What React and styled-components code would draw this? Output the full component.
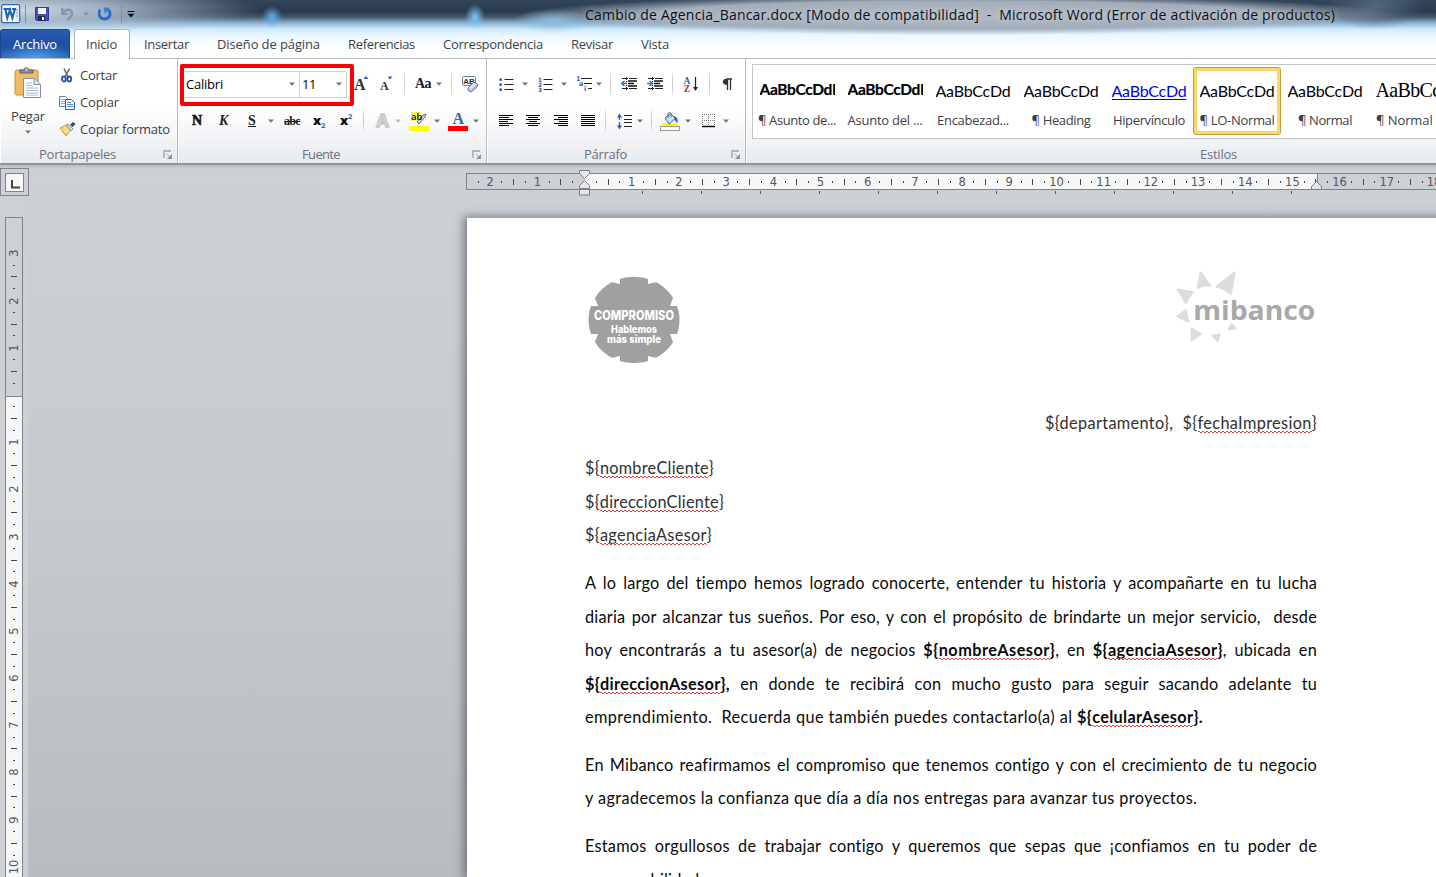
import React, { useLayoutEffect, useRef, useState } from "react";
import styled, { createGlobalStyle, css } from "styled-components";

const UI = `"Open Sans", "Noto Sans", sans-serif`;
const DOC = `Lato, "Open Sans", sans-serif`;

const Global = createGlobalStyle`
  * { box-sizing: border-box; }
  body { margin: 0; background: #c9ccd1; overflow: hidden; font-family: ${UI}; }
`;

/* Text that is tracked so that it fills exactly the given width. */
const Tracked = styled.span`
  display: inline-block;
  white-space: pre;
  text-decoration: inherit;
`;
function Fit({ w, children }) {
  const ref = useRef(null);
  const [ls, setLs] = useState(0);
  useLayoutEffect(() => {
    const n = ref.current.textContent.length;
    const cur = ref.current.getBoundingClientRect().width;
    setLs((v) => v + (w - cur) / n);
  }, [w]);
  return <Tracked ref={ref} style={{ letterSpacing: ls + "px" }}>{children}</Tracked>;
}

const Window = styled.div`
  width: 1436px;
  height: 877px;
  overflow: hidden;
  display: flex;
  flex-direction: column;
`;

/* ---------- title bar and tabs ---------- */
const Chrome = styled.header`
  height: 59px;
  flex: none;
  display: flex;
  flex-direction: column;
  background:
    radial-gradient(ellipse 260px 26px at 0px 10px, #d3e0ec 0, #b4c6d6cc 45%, transparent 100%),
    radial-gradient(ellipse 10px 11px at 272px 17px, #5fb0f0 0, transparent 100%),
    radial-gradient(ellipse 10px 13px at 475px 17px, #7cc4f8 0, transparent 100%),
    radial-gradient(ellipse 40px 12px at 553px 21px, #8dbde0 0, transparent 100%),
    radial-gradient(ellipse 440px 20px at 960px 15px, #b3bac4 0, #a3adba 70%, transparent 100%),
    radial-gradient(ellipse 50px 24px at 1375px 6px, #53677e 0, transparent 100%),
    linear-gradient(#33455a 0, #2a3a4d 12px, #43586e 17px, #8fb2d0 23px, #cdeaff 29px, #ecf8ff 36px, #fafdfe 46px, #fff 58px);
`;
const TitleBar = styled.div`
  height: 29px;
  display: flex;
  align-items: center;
  padding-left: 1px;
`;
const QuickAccess = styled.div`
  width: 584px;
  display: flex;
  align-items: center;
  height: 27px;
  padding-bottom: 2px;
`;
const Title = styled.div`
  font-size: 14px;
  line-height: 27px;
  height: 28px;
  color: #0b0f14;
  text-shadow: 0 0 6px rgba(225, 232, 240, 0.8);
`;
const Tabs = styled.nav`
  height: 30px;
  display: flex;
  align-items: stretch;
  border-bottom: 1px solid #b6babf;
  font-size: 13px;
  color: #3f4348;
`;
const FileTab = styled.div`
  width: 70px;
  height: 29px;
  margin-right: 4px;
  padding-left: 12px;
  line-height: 29px;
  color: #fff;
  border: 1px solid #1b468f;
  border-bottom: 0;
  border-radius: 3px 3px 0 0;
  background: radial-gradient(ellipse 40px 14px at 50% 100%, #4ba0ea 0, transparent 100%),
    linear-gradient(#2a5caf, #1f4ea3 50%, #2563b8);
`;
const Tab = styled.div`
  width: ${(p) => p.$w}px;
  padding-left: ${(p) => p.$pl}px;
  line-height: 31px;
  ${(p) => p.$active && css`
    height: 30px;
    line-height: 29px;
    padding-left: 11px;
    background: #fff;
    border: 1px solid #b0b4ba;
    border-bottom: 0;
    border-radius: 3px 3px 0 0;
  `}
`;

/* ---------- ribbon ---------- */
const Ribbon = styled.section`
  height: 106px;
  flex: none;
  display: flex;
  background: linear-gradient(#fff 0, #fff 45%, #f3f4f6 75%, #e6eaef 100%);
  border-bottom: 2px solid #8f949b;
  color: #3c4045;
  font-size: 13px;
`;
const Group = styled.div`
  position: relative;
  width: ${(p) => p.$w}px;
  flex: none;
  display: flex;
  flex-direction: column;
  border-right: 1px solid #b9bdc3;
  box-shadow: inset 1px 0 #fff;
`;
const GroupBody = styled.div`
  height: 84px;
  flex: none;
  display: flex;
  flex-direction: ${(p) => (p.$row ? "row" : "column")};
`;
const GroupLabel = styled.div`
  height: 20px;
  line-height: 23px;
  display: flex;
  justify-content: space-between;
  padding-left: ${(p) => p.$pl}px;
  padding-right: 4px;
  color: #6b717a;
`;
const PasteButton = styled.div`
  width: 56px;
  padding-top: 8px;
  display: flex;
  flex-direction: column;
  align-items: center;
  line-height: 20px;
  & > svg:first-child { margin-bottom: 8px; }
  & > svg:last-child { margin-top: 4px; }
`;
const ClipList = styled.div`
  display: flex;
  flex-direction: column;
  padding-top: 3px;
`;
const ClipItem = styled.div`
  height: 27px;
  display: flex;
  align-items: center;
  line-height: 24px;
  & > ${Tracked} { margin-top: -2px; }
`;
const ClipIcon = styled.div`
  width: 24px;
  flex: none;
  padding-left: ${(p) => p.$pl}px;
  line-height: 0;
`;
const ToolRow = styled.div`
  height: ${(p) => p.$h}px;
  padding-left: ${(p) => p.$pl}px;
  padding-top: ${(p) => p.$pt || 0}px;
  display: flex;
  align-items: center;
`;
const Slot = styled.div`
  width: ${(p) => p.$w}px;
  height: 24px;
  flex: none;
  display: flex;
  align-items: center;
`;
const Glyph = styled.span`
  font-family: ${(p) => p.$f || `"Liberation Serif", serif`};
  font-size: ${(p) => p.$s || 14}px;
  font-weight: 700;
  font-style: ${(p) => (p.$i ? "italic" : "normal")};
  text-decoration: ${(p) => p.$d || "none"};
  -webkit-text-stroke: ${(p) => (p.$heavy ? "0.6px #111" : "0")};
  color: #1c1c1c;
  line-height: 20px;
  white-space: nowrap;
`;
const Combo = styled.div`
  width: ${(p) => p.$w}px;
  height: 27px;
  flex: none;
  border: 1px solid #cfd1d4;
  border-left-width: ${(p) => (p.$joined ? 0 : 1)}px;
  background: #fff;
  display: flex;
  align-items: center;
  justify-content: space-between;
  padding: 0 4px 1px 2px;
  font-size: 13px;
  line-height: 22px;
  color: #000;
`;
const Highlight = styled.div`
  position: absolute;
  left: 2px;
  top: 5px;
  width: 174px;
  height: 42px;
  border: 4px solid #fb0007;
  border-radius: 2px;
`;
const Divider = styled.i`
  width: 1px;
  height: 22px;
  background: linear-gradient(#e4e6e9, #c3c7cd, #e4e6e9);
`;
const BarDivider = styled(Divider)`
  height: 18px;
  background: #7f8fa0;
`;
const Gallery = styled.div`
  height: 75px;
  width: 720px;
  margin: 5px 0 0 6px;
  border: 1px solid #c3c7cc;
  background: #fff;
  display: flex;
`;
const StyleCard = styled.div`
  width: 88px;
  height: 68px;
  margin-top: 2px;
  flex: none;
  display: flex;
  flex-direction: column;
  align-items: center;
  white-space: nowrap;
  border: 1px solid transparent;
  ${(p) => p.$on && css`
    border-color: #c39a3c;
    border-radius: 3px;
    box-shadow: inset 0 0 0 3px #fcd766;
  `}
`;
const Preview = styled.div`
  height: 32px;
  margin-top: 7px;
  line-height: ${(p) => (p.$b ? 29 : 31)}px;
  font-family: ${(p) => (p.$serif ? `"Liberation Serif", serif` : DOC)};
  font-size: ${(p) => (p.$serif ? 20 : p.$b ? 15.5 : 16)}px;
  font-weight: ${(p) => (p.$b ? 700 : 400)};
  -webkit-text-stroke: ${(p) => (p.$b ? "0.2px #000" : "0")};
  color: ${(p) => (p.$link ? "#0000f0" : "#000")};
  text-decoration: ${(p) => (p.$link ? "underline" : "none")};
  text-underline-offset: 2px;
  width: 75px;
  overflow: hidden;
`;
const CardName = styled.div`
  line-height: 27px;
  color: #3c4045;
`;

const CaretSvg = styled.svg`
  display: block;
`;
const Caret = ({ c = "#777" }) => (
  <CaretSvg width="6" height="4"><path d="M0 0.5h6L3 3.7z" fill={c} /></CaretSvg>
);
const LauncherSvg = styled.svg`
  margin-top: 7px;
`;
const Launcher = () => (
  <LauncherSvg width="10" height="10">
    <path d="M1 8V1h7" fill="none" stroke="#9b9fa6" strokeWidth="1.3" />
    <path d="M4 4l3 3" stroke="#9b9fa6" /><path d="M9 4v5H4z" fill="#8d9198" />
  </LauncherSvg>
);

const WordLogo = () => (
  <svg width="20" height="20">
    <rect x="0.7" y="0.7" width="18" height="18" rx="1.5" fill="#fff" stroke="#2e67a9" strokeWidth="1.2" />
    <path d="M14 3h4v14h-4z" fill="#dfeaf6" /><path d="M15 6h2M15 9h2M15 12h2" stroke="#6d9bd0" />
    <path d="M2.5 5h4M6 5h4M11 5h4M4.3 5l2 9 2.7-8 2.4 8 2.4-9" fill="none" stroke="#2566b0" strokeWidth="2.2" />
  </svg>
);
const Save = () => (
  <svg width="14" height="14">
    <path d="M0.5 0.5h13v13h-12l-1-1z" fill="#4a50b8" stroke="#32388f" />
    <path d="M3 1h8v6H3z" fill="#f3f5ff" /><path d="M3 9h7v5H3z" fill="#23275f" /><path d="M7 10h2v3H7z" fill="#fff" />
  </svg>
);
const Undo = () => (
  <svg width="13" height="14">
    <path d="M1.2 1v6h6" fill="none" stroke="#8796a8" strokeWidth="2.2" />
    <path d="M2 6C5 1.5 11 2 11 6.5 11 9 9 11 6.5 13" fill="none" stroke="#8796a8" strokeWidth="2.6" />
  </svg>
);
const Redo = () => (
  <svg width="14" height="14">
    <path d="M2.2 2.5C-0.8 7 2 12 6.500 12S14 7 10.500 3" fill="none" stroke="#2b6bc8" strokeWidth="2.800" />
    <path d="M5.500 0.500h6l-0.500 2L7 7z" fill="#3b7dd8" />
  </svg>
);
const CustomizeBar = () => (
  <svg width="8" height="8"><path d="M0.5 1.5h7" stroke="#111" /><path d="M0.5 3.7h7L4 7.5z" fill="#111" /></svg>
);
const Paste = () => (
  <svg width="28" height="31">
    <rect x="1" y="3" width="23" height="25" rx="2" fill="#eebc67" stroke="#c68f3c" />
    <path d="M6 6V3h4c0-3 5-3 5 0h4v3z" fill="#8b8e92" stroke="#5e6165" /><circle cx="12.500" cy="2.500" r="1" fill="#fff" />
    <path d="M9.500 11.500h11l6 6v13h-17z" fill="#fdfeff" stroke="#7f8ea3" /><path d="M20 11.500v6h6" fill="#e3ebf5" stroke="#7f8ea3" />
    <path d="M12 16h6M12 18.500h6M12 21h12M12 23.500h12M12 26h12M12 28h12" stroke="#a9bcd6" />
  </svg>
);
const Cut = () => (
  <svg width="12" height="15">
    <path d="M3 0.500l4.500 9M8.500 0.500L4 9" stroke="#5d6b7c" strokeWidth="1.600" />
    <ellipse cx="2.900" cy="11" rx="1.900" ry="2.500" fill="none" stroke="#2555a5" strokeWidth="1.900" />
    <ellipse cx="8.300" cy="11" rx="1.900" ry="2.500" fill="none" stroke="#2555a5" strokeWidth="1.900" />
  </svg>
);
const Copy = () => (
  <svg width="17" height="14">
    <path d="M0.500 0.500h6l2 2v8h-8z" fill="#fff" stroke="#5a7fb5" /><path d="M2 3.500h4M2 5.500h5M2 7.500h5" stroke="#8dabd8" />
    <path d="M6.500 3.500h6l3 3v7h-9z" fill="#fff" stroke="#2d5ba5" /><path d="M8 6.500h4M8 8.500h6M8 10.500h6" stroke="#5f8dcc" />
  </svg>
);
const Brush = () => (
  <svg width="17" height="15">
    <path d="M1 6l6-3 5 5-5 6z" fill="#f2cf62" stroke="#b98f2c" strokeWidth="0.800" />
    <path d="M3 7l6 4M5 5l5 4" stroke="#fff3b5" /><path d="M7 3l2-1 5 5-2 2z" fill="#d8dbe2" stroke="#676d7d" strokeWidth="0.700" />
    <path d="M11 3l3-3 2.500 2-3 3z" fill="#34467c" />
  </svg>
);
const GrowFont = ({ down }) => (
  <svg width="16" height="18">
    <text x="0" y="14.500" fontFamily="Liberation Serif" fontWeight="700" fontSize={down ? 12 : 16} fill="#333">A</text>
    <path d={down ? "M7.500 1.500h5l-2.500 3z" : "M9.500 4h5L12 1z"} fill="#2d5fb0" />
  </svg>
);
const ClearFormat = () => (
  <svg width="17" height="17">
    <rect x="0.500" y="0.500" width="13" height="9" rx="1" fill="#f7faff" stroke="#6681aa" />
    <text x="1.300" y="8" fontFamily="Liberation Sans" fontWeight="700" fontSize="8" fill="#333">AB</text>
    <path d="M6 12l6-6 3.500 2.500v2l-6 5.500L6 14.500z" fill="#d7e3f5" stroke="#5878ad" />
    <path d="M6 12l3.500 2.500 6-6" fill="none" stroke="#7d98c6" />
  </svg>
);
const ListIcon = ({ numbers }) => (
  <svg width="15" height="15">
    <path d="M5.500 2.500h9M5.500 7.500h9M5.500 12.500h9" stroke="#222" />
    {numbers
      ? [1, 2, 3].map((n, i) => <text key={n} x="0" y={4.800 + i * 5} fontSize="5.800" fontWeight="700" fontFamily="DejaVu Sans" fill="#2f5fae">{n}</text>)
      : [2.500, 7.500, 12.500].map((y) => <rect key={y} x="0.300" y={y - 1.300} width="2.700" height="2.700" rx="1" fill="#2f5fae" />)}
  </svg>
);
const MultiLevel = () => (
  <svg width="17" height="16">
    <path d="M5 2.500h11M8 7.500h8M12 12.500h4" stroke="#222" />
    <g fill="#2f5fae" fontSize="6.500" fontWeight="700" fontFamily="DejaVu Sans"><text x="0" y="5">1</text><text x="3" y="10">a</text><text x="8" y="15">i</text></g>
  </svg>
);
const Indent = ({ right }) => (
  <svg width="17" height="14">
    <path d="M1 1.500h15M1 11.500h15" stroke="#222" strokeDasharray="6 1 9" />
    <path d="M7 4h9M7 6.500h6M7 9h9" stroke="#111" strokeWidth="1.600" /><path d="M5.500 0v14" stroke="#222" strokeDasharray="1 1" />
    <path d={right ? "M0 6.500h4M2.500 4l3 2.500-3 2.500" : "M6 6.500H2M3.500 4l-3 2.500 3 2.500"} fill="none" stroke="#2f6fc0" strokeWidth="1.500" />
  </svg>
);
const SortIcon = () => (
  <svg width="17" height="17">
    <text x="0.500" y="7.500" fontSize="9.500" fontWeight="700" fontFamily="Liberation Serif" fill="#2f5fae">A</text>
    <text x="0.800" y="15.500" fontSize="9.500" fontWeight="700" fontFamily="Liberation Serif" fill="#963434">Z</text>
    <path d="M12.500 1v11" stroke="#222" strokeWidth="1.300" /><path d="M10 11h5l-2.500 4z" fill="#222" />
  </svg>
);
const Pilcrow = () => (
  <svg width="11" height="13"><path d="M5.500 1v11M8.500 1v11M5 1h5" stroke="#333" strokeWidth="1.300" /><path d="M5.500 0.500v6.500C-0.800 7-0.800 0.500 5.500 0.500z" fill="#333" /></svg>
);
const ALIGN = {
  left: ["0 14", "0 10", "0 14", "0 9", "0 14", "0 10"],
  center: ["0 14", "2 12", "0 14", "3 11", "0 14", "2 12"],
  right: ["0 14", "4 14", "0 14", "5 14", "0 14", "4 14"],
  full: ["0 14", "0 14", "0 14", "0 14", "0 14", "0 14"],
};
const Align = ({ kind }) => (
  <svg width="14" height="12">
    {ALIGN[kind].map((s, i) => {
      const [a, b] = s.split(" ");
      return <path key={i} d={`M${a} ${0.500 + i * 2.0}H${b}`} stroke="#000" />;
    })}
  </svg>
);
const LineSpacing = () => (
  <svg width="16" height="17">
    <path d="M2.500 2v12" stroke="#2f5fae" strokeDasharray="5 2 5" strokeWidth="1.300" /><path d="M0 4.500L2.500 0.500 5 4.500zM0 12.500l2.500 4 2.500-4z" fill="#2f5fae" />
    <path d="M7 2.500h8M7 6.500h8M7 9.500h8M7 13.500h8" stroke="#222" />
  </svg>
);
const Bucket = () => (
  <svg width="20" height="19">
    <path d="M2 12.500h16" stroke="#f4f000" strokeWidth="2" />
    <path d="M5 6l5.500-4.500 5 5L9 12z" fill="#cddcf0" stroke="#48658f" /><path d="M8 6V2c0-2 3-2 3 0v3" fill="none" stroke="#48658f" />
    <path d="M14 4c3 1 4 3 3.500 7-2-1-3-3-3.500-7z" fill="#2f62ad" /><rect x="0.500" y="14.500" width="19" height="4" fill="#fff" stroke="#999" />
  </svg>
);
const Borders = () => (
  <svg width="14" height="14"><path d="M0.500 0v12M6.500 0v12M12.500 0v12M0 0.500h13M0 6.500h13" stroke="#777" strokeDasharray="1 1" /><path d="M0 12.500h13" stroke="#000" strokeWidth="1.400" /></svg>
);
const TextEffect = () => (
  <svg width="17" height="18"><text x="1" y="15" fontFamily="Liberation Sans" fontWeight="700" fontSize="18" fill="#e6e7e9" stroke="#c3c5c8" strokeWidth="1.500">A</text></svg>
);
const Marker = () => (
  <svg width="20" height="19">
    <rect x="2" y="0" width="10" height="9" fill="#f6ee66" /><rect x="0" y="14" width="20" height="5" fill="#ffff00" />
    <path d="M8 10l6-7 3-1-1 3-6 7z" fill="#cfdaeb" stroke="#55709b" />
    <text x="2" y="8" fontFamily="Open Sans" fontWeight="600" fontSize="9.500" fill="#111">ab</text>
  </svg>
);
const FontColor = () => (
  <svg width="20" height="19">
    <text x="4.500" y="12" fontFamily="Liberation Serif" fontWeight="700" fontSize="16" fill="#3562ae">A</text>
    <rect x="0" y="14" width="20" height="5" fill="#fb0000" />
  </svg>
);
const Script = ({ up }) => (
  <svg width="15" height="18">
    <text x="0" y="13" fontFamily="Open Sans" fontWeight="800" fontSize="13" fill="#111">x</text>
    <text x="8" y={up ? 7 : 15.500} fontFamily="DejaVu Sans" fontWeight="700" fontSize="6.500" fill="#2d68b5">2</text>
  </svg>
);

const STYLES = [
  { name: "¶ Asunto de...", w: 78, b: true, extra: true },
  { name: "Asunto del ...", w: 75, b: true, extra: true },
  { name: "Encabezad...", w: 72 },
  { name: "¶ Heading", w: 59 },
  { name: "Hipervínculo", w: 72, link: true },
  { name: "¶ LO-Normal", w: 75, on: true },
  { name: "¶ Normal", w: 54 },
  { name: "¶ Normal -...", w: 74, serif: true },
];
const TABS = [
  ["Insertar", 45, 73, 14], ["Diseño de página", 103, 131, 14], ["Referencias", 67, 95, 14],
  ["Correspondencia", 100, 128, 14], ["Revisar", 42, 70, 14], ["Vista", 28, 60, 14],
];

/* ---------- workspace ---------- */
const Workspace = styled.main`
  flex: 1;
  min-height: 0;
  display: flex;
  background: linear-gradient(#b9bcc1 0, #cdd0d5 4px, #c6c9cd 355px, #b8bcc1 712px);
`;
const LeftRail = styled.aside`
  width: 28px;
  flex: none;
  background: linear-gradient(#b9bcc1 0, #cdd0d5 4px, #cdd0d5 100%);
  padding-top: 3px;
  display: flex;
  flex-direction: column;
`;
const TabSelector = styled.div`
  width: 29px;
  height: 28px;
  flex: none;
  border: 1px solid #7f848c;
  display: flex;
  align-items: center;
  justify-content: center;
`;
const TabSelectorFace = styled.div`
  width: 19px;
  height: 19px;
  border: 1px solid #7f848c;
  background: #f7f7f7;
  display: flex;
  align-items: flex-end;
  padding: 0 0 2px 5px;
`;
const VRuler = styled.div`
  width: 18px;
  flex: 1;
  min-height: 0;
  margin: 21px 0 0 5px;
  padding-top: 29.5px;
  border: 1px solid #7f848c;
  border-bottom: 0;
  background: linear-gradient(transparent 178px, #7f848c 178px, #7f848c 179px, #f7f7f7 179px);
  display: flex;
  flex-direction: column;
  align-items: center;
  overflow: hidden;
`;
const Mark = styled.div`
  ${(p) => (p.$v ? "height" : "width")}: 11.81px;
  ${(p) => (p.$v ? "width" : "height")}: 15px;
  flex: none;
  display: flex;
  align-items: center;
  justify-content: center;
  font-family: "DejaVu Sans", sans-serif;
  font-size: 11.5px;
  color: #55585c;
  & > b { font-weight: 400; ${(p) => p.$v && "transform: rotate(-90deg);"} }
  & > i {
    background: #44474b;
    ${(p) => p.$v ? `width: ${p.$k === 2 ? 6 : 2}px; height: 1px;` : `height: ${p.$k === 2 ? 6 : 2}px; width: 1px;`}
  }
`;
function marks(from, to, v) {
  const out = [];
  for (let q = from; q <= to; q++) {
    const k = ((q % 4) + 4) % 4;
    out.push(
      <Mark key={q} $v={v} $k={k}>{k === 0 ? <b>{q === 0 ? "" : Math.abs(q / 4)}</b> : <i />}</Mark>
    );
  }
  return out;
}
const Canvas = styled.div`
  flex: 1;
  min-width: 0;
  padding: 8px 0 0 438px;
  display: flex;
  flex-direction: column;
`;
const HRuler = styled.div`
  position: relative;
  height: 17px;
  flex: none;
  border: 1px solid #7f848c;
  border-right: 0;
  background: linear-gradient(90deg, transparent 118px, #f7f7f7 118px, #f7f7f7 850px, #7f848c 850px, #7f848c 851px, transparent 851px);
`;
const HMarks = styled.div`
  display: flex;
  overflow: hidden;
  & > :first-child { margin-left: -6.3px; }
`;
const IndentMarker = styled.svg`
  position: absolute;
  left: ${(p) => p.$x}px;
  top: ${(p) => p.$y}px;
`;
const TabStops = styled.div`
  height: 28px;
  flex: none;
  padding: 1px 0 0 118px;
  display: flex;
`;
const Stop = styled.i`
  width: 59px;
  height: 3px;
  flex: none;
  border-right: 1px solid #55585c;
`;
const Page = styled.article`
  width: 990px;
  flex: 1;
  min-height: 0;
  margin-left: 1px;
  overflow: visible;
  background: #fff;
  box-shadow: 0 -1px 0 #a3a9b3, -2px 0 9px 1px rgba(60, 65, 75, 0.65);
  padding: 52px 0 0 118px;
  font-family: ${DOC};
  font-size: 16.300px;
  color: #111;
`;
const PageHeader = styled.div`
  width: 732px;
  height: 136px;
  display: flex;
  justify-content: space-between;
`;
const Line = styled.div`
  width: 732px;
  height: 33.55px;
  line-height: 33.55px;
  white-space: pre-wrap;
  margin-top: ${(p) => p.$gap || 0}px;
  letter-spacing: ${(p) => p.$ls || 0.22}px;
  text-align: ${(p) => (p.$right ? "right" : "left")};
  text-align-last: ${(p) => (p.$just ? "justify" : "auto")};
  color: ${(p) => (p.$soft ? "#303030" : "#0a0a0a")};
  & b { font-weight: 700; }
`;
const Misspelt = styled.span`
  position: relative;
  display: inline-block;
  line-height: 20px;
  &::after {
    content: "";
    position: absolute;
    left: 0;
    right: 0;
    bottom: 0;
    height: 2px;
    background:
      repeating-linear-gradient(90deg, #f03a3a 0 2px, transparent 2px 4px) 0 0 / 100% 1px no-repeat,
      repeating-linear-gradient(90deg, transparent 0 2px, #f03a3a 2px 4px) 0 1px / 100% 1px no-repeat;
  }
`;
const BadgeSvg = styled.svg`
  margin: 6px 0 0 3px;
`;
const wedges = [[1, 1], [-1, 1], [1, -1], [-1, -1]];
const Badge = () => (
  <BadgeSvg width="92" height="90" viewBox="-46 -44 92 90">
    <ellipse rx="45.500" ry="43.300" fill="#a0a0a0" />
    {wedges.map(([a, b]) => (
      <g key={`${a}${b}`} transform={`scale(${a} ${b})`} fill="#fff">
        <path d="M-14-46V-36L-25-38.500-30-46z" /><path d="M-47-14H-36L-40.500-26-50-27z" />
      </g>
    ))}
    <g fill="#fff" fontFamily="Inter" fontWeight="800">
      <text x="-40" y="-0.500" fontSize="13" textLength="80" lengthAdjust="spacingAndGlyphs">COMPROMISO</text>
      <text x="-23" y="13" fontSize="9.800" textLength="46" lengthAdjust="spacingAndGlyphs">Hablemos</text>
      <text x="-27" y="23" fontSize="9.800" textLength="54" lengthAdjust="spacingAndGlyphs">más simple</text>
    </g>
  </BadgeSvg>
);
const Mibanco = () => (
  <svg width="141" height="78" viewBox="50 30 423 234">
    <g fill="#dcdcdc" stroke="#dcdcdc" strokeWidth="7" strokeLinejoin="round">
      <path d="M124 38L116 83Q133 73 152 77z" /><path d="M226 38L172 80Q196 84 214 102z" />
      <path d="M56 89L100 97Q86 110 80 128z" /><path d="M55 169L80 151Q80 168 87 184z" />
      <path d="M98 205Q110 216 124 222L97 240z" /><path d="M160 226Q170 227 180 224L175 243z" />
      <path d="M208 207Q215 200 218 193L228 206z" />
    </g>
    <text x="102" y="179" fontFamily="Open Sans" fontWeight="700" fontSize="80" fill="#a9a9a9" textLength="366" lengthAdjust="spacingAndGlyphs">mibanco</text>
  </svg>
);
const Field = ({ name }) => <>{"${"}<Misspelt>{name}</Misspelt>{"}"}</>;

export default function App() {
  return (
    <>
      <Global />
      <Window>
        <Chrome>
          <TitleBar>
            <QuickAccess>
              <Slot $w={24}><WordLogo /></Slot>
              <Slot $w={10}><BarDivider /></Slot>
              <Slot $w={26}><Save /></Slot>
              <Slot $w={22}><Undo /></Slot>
              <Slot $w={15}><Caret c="#8592a0" /></Slot>
              <Slot $w={23}><Redo /></Slot>
              <Slot $w={6}><BarDivider /></Slot>
              <Slot $w={10}><CustomizeBar /></Slot>
            </QuickAccess>
            <Title><Fit w={750}>{"Cambio de Agencia_Bancar.docx [Modo de compatibilidad]  -  Microsoft Word (Error de activación de productos)"}</Fit></Title>
          </TitleBar>
          <Tabs>
            <FileTab><Fit w={44}>Archivo</Fit></FileTab>
            <Tab $w={56} $active><Fit w={31}>Inicio</Fit></Tab>
            {TABS.map(([t, w, cell, pl]) => <Tab key={t} $w={cell} $pl={pl}><Fit w={w}>{t}</Fit></Tab>)}
          </Tabs>
        </Chrome>

        <Ribbon>
          <Group $w={178}>
            <GroupBody $row>
              <PasteButton><Paste /><Fit w={34}>Pegar</Fit><Caret /></PasteButton>
              <ClipList>
                <ClipItem><ClipIcon $pl={5}><Cut /></ClipIcon><Fit w={37}>Cortar</Fit></ClipItem>
                <ClipItem><ClipIcon $pl={3}><Copy /></ClipIcon><Fit w={39}>Copiar</Fit></ClipItem>
                <ClipItem><ClipIcon $pl={3}><Brush /></ClipIcon><Fit w={90}>Copiar formato</Fit></ClipItem>
              </ClipList>
            </GroupBody>
            <GroupLabel $pl={39}><Fit w={77}>Portapapeles</Fit><Launcher /></GroupLabel>
          </Group>

          <Group $w={309}>
            <GroupBody>
              <ToolRow $h={38} $pl={5} $pt={12}>
                <Combo $w={117}><Fit w={37}>Calibri</Fit><Caret /></Combo>
                <Combo $w={47} $joined><Fit w={14}>11</Fit><Caret /></Combo>
                <Slot $w={7} />
                <Slot $w={26}><GrowFont /></Slot>
                <Slot $w={24}><GrowFont down /></Slot>
                <Slot $w={11}><Divider /></Slot>
                <Slot $w={21}><Glyph $s={14}><Fit w={16}>Aa</Fit></Glyph></Slot>
                <Slot $w={15}><Caret /></Slot>
                <Slot $w={11}><Divider /></Slot>
                <Slot $w={17}><ClearFormat /></Slot>
              </ToolRow>
              <ToolRow $h={46} $pl={14} $pt={2}>
                <Slot $w={27}><Glyph $heavy>N</Glyph></Slot>
                <Slot $w={29}><Glyph $i>K</Glyph></Slot>
                <Slot $w={20}><Glyph $d="underline">S</Glyph></Slot>
                <Slot $w={16}><Caret /></Slot>
                <Slot $w={29}><Glyph $s={12} $d="line-through"><Fit w={16}>abc</Fit></Glyph></Slot>
                <Slot $w={27}><Script /></Slot>
                <Slot $w={23}><Script up /></Slot>
                <Slot $w={12}><Divider /></Slot>
                <Slot $w={20}><TextEffect /></Slot>
                <Slot $w={14}><Caret c="#bbb" /></Slot>
                <Slot $w={25}><Marker /></Slot>
                <Slot $w={14}><Caret /></Slot>
                <Slot $w={25}><FontColor /></Slot>
                <Slot $w={7}><Caret /></Slot>
              </ToolRow>
            </GroupBody>
            <GroupLabel $pl={124}><Fit w={38}>Fuente</Fit><Launcher /></GroupLabel>
            <Highlight />
          </Group>

          <Group $w={259}>
            <GroupBody>
              <ToolRow $h={38} $pl={12} $pt={12}>
                <Slot $w={23}><ListIcon /></Slot>
                <Slot $w={16}><Caret /></Slot>
                <Slot $w={23}><ListIcon numbers /></Slot>
                <Slot $w={15}><Caret /></Slot>
                <Slot $w={20}><MultiLevel /></Slot>
                <Slot $w={14}><Caret /></Slot>
                <Slot $w={11}><Divider /></Slot>
                <Slot $w={26}><Indent /></Slot>
                <Slot $w={25}><Indent right /></Slot>
                <Slot $w={11}><Divider /></Slot>
                <Slot $w={26}><SortIcon /></Slot>
                <Slot $w={13}><Divider /></Slot>
                <Slot $w={11}><Pilcrow /></Slot>
              </ToolRow>
              <ToolRow $h={46} $pl={12} $pt={2}>
                <Slot $w={27}><Align kind="left" /></Slot>
                <Slot $w={28}><Align kind="center" /></Slot>
                <Slot $w={27}><Align kind="right" /></Slot>
                <Slot $w={24}><Align kind="full" /></Slot>
                <Slot $w={12}><Divider /></Slot>
                <Slot $w={20}><LineSpacing /></Slot>
                <Slot $w={14}><Caret /></Slot>
                <Slot $w={9}><Divider /></Slot>
                <Slot $w={25}><Bucket /></Slot>
                <Slot $w={17}><Caret /></Slot>
                <Slot $w={21}><Borders /></Slot>
                <Slot $w={7}><Caret /></Slot>
              </ToolRow>
            </GroupBody>
            <GroupLabel $pl={97}><Fit w={43}>Párrafo</Fit><Launcher /></GroupLabel>
          </Group>

          <Group $w={740}>
            <GroupBody>
              <Gallery>
                {STYLES.map((s) => (
                  <StyleCard key={s.name} $on={s.on}>
                    <Preview $b={s.b} $link={s.link} $serif={s.serif}>
                      <Fit w={s.extra ? 81 : s.serif ? 88 : 75}>{s.extra ? "AaBbCcDdE" : "AaBbCcDd"}</Fit>
                    </Preview>
                    <CardName><Fit w={s.w}>{s.name}</Fit></CardName>
                  </StyleCard>
                ))}
              </Gallery>
            </GroupBody>
            <GroupLabel $pl={454}><Fit w={37}>Estilos</Fit></GroupLabel>
          </Group>
        </Ribbon>

        <Workspace>
          <LeftRail>
            <TabSelector>
              <TabSelectorFace><svg width="9" height="9"><path d="M1 0v7.500h8" fill="none" stroke="#444" strokeWidth="2" /></svg></TabSelectorFace>
            </TabSelector>
            <VRuler>{marks(-12, 42, true)}</VRuler>
          </LeftRail>
          <Canvas>
            <HRuler>
              <HMarks>{marks(-10, 74, false)}</HMarks>
              <IndentMarker $x={112} $y={-4} width="12" height="27">
                <g fill="#e6e6e6" stroke="#7b7e83">
                  <path d="M0.500 0.500h10v3l-5 5-5-5z" /><path d="M5.500 10.500l5 5v3h-10v-3z" /><rect x="0.500" y="19.500" width="10" height="5.500" />
                </g>
              </IndentMarker>
              <IndentMarker $x={844} $y={6} width="12" height="10">
                <path d="M5.500 1.500l5 5v3h-10v-3z" fill="#e6e6e6" stroke="#7b7e83" />
              </IndentMarker>
            </HRuler>
            <TabStops>{Array.from({ length: 12 }, (_, i) => <Stop key={i} />)}</TabStops>
            <Page>
              <PageHeader><Badge /><Mibanco /></PageHeader>
              <Line $right $soft><Fit w={272}>{"${departamento},  ${"}<Misspelt>fechaImpresion</Misspelt>{"}"}</Fit></Line>
              <Line $soft $gap={11.5}><Fit w={129}><Field name="nombreCliente" /></Fit></Line>
              <Line $soft><Fit w={139}><Field name="direccionCliente" /></Fit></Line>
              <Line $soft><Fit w={127}><Field name="agenciaAsesor" /></Fit></Line>
              <Line $just $gap={14.3}>A lo largo del tiempo hemos logrado conocerte, entender tu historia y acompañarte en tu lucha</Line>
              <Line $just>diaria por alcanzar tus sueños. Por eso, y con el propósito de brindarte un mejor servicio,{"  "}desde</Line>
              <Line $just>hoy encontrarás a tu asesor(a) de negocios <b><Fit w={132}><Field name="nombreAsesor" /></Fit></b>, en <b><Fit w={130}><Field name="agenciaAsesor" /></Fit></b>, ubicada en</Line>
              <Line $just><b><Fit w={145}><Field name="direccionAsesor" />,</Fit></b> en donde te recibirá con mucho gusto para seguir sacando adelante tu</Line>
              <Line><Fit w={492}>{"emprendimiento.  Recuerda que también puedes contactarlo(a) al "}</Fit><b><Fit w={126}><Field name="celularAsesor" />.</Fit></b></Line>
              <Line $just $gap={14.2}>En Mibanco reafirmamos el compromiso que tenemos contigo y con el crecimiento de tu negocio</Line>
              <Line><Fit w={612}>y agradecemos la confianza que día a día nos entregas para avanzar tus proyectos.</Fit></Line>
              <Line $just $gap={13.7}>Estamos orgullosos de trabajar contigo y queremos que sepas que ¡confiamos en tu poder de</Line>
              <Line $gap={1}>responsabilidad</Line>
            </Page>
          </Canvas>
        </Workspace>
      </Window>
    </>
  );
}
